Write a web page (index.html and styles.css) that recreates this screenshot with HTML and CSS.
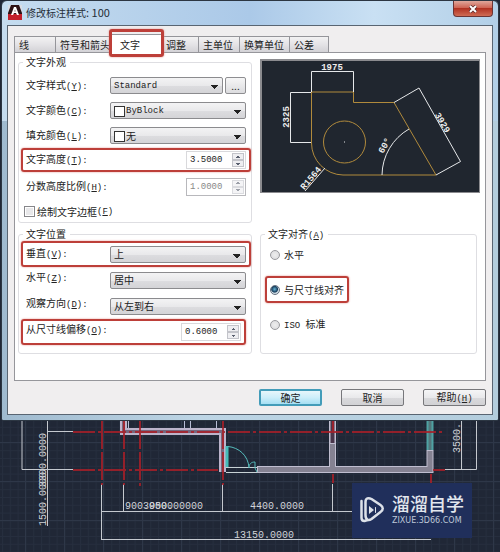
FILE: index.html
```html
<!DOCTYPE html>
<html lang="zh-CN">
<head>
<meta charset="utf-8">
<title>修改标注样式: 100</title>
<link rel="stylesheet" href="styles.css">
</head>
<body>
<main class="dialog">
  <header class="titlebar">
    <svg class="app-icon" viewBox="0 0 14 15" aria-hidden="true">
      <path d="M0 0h14v9H0z" fill="#2b1114"/><path d="M0 9h14v6H0z" fill="#c3202b"/>
      <path d="M0 0h3L0 8zM11 0h3v8z" fill="#d8dde4"/>
      <path d="M3 10 6 2h2l3 8H9L8 8H6l-1 2z" fill="#fff"/><path d="m6.500 6.500.500-2 .500 2z" fill="#2b1114"/>
    </svg>
    <h1>修改标注样式<span>: 100</span></h1>
    <button class="close" aria-label="关闭"><svg viewBox="0 0 10 8"><path d="m2 1 6 6M8 1 2 7" stroke="#5c2a2a" stroke-width="3.500"/><path d="m2 1 6 6M8 1 2 7" stroke="#fff" stroke-width="2"/></svg></button>
  </header>
  <div class="client">
    <nav class="tabs">
      <button class="tab t-line">线</button>
      <button class="tab t-symbol">符号和箭头</button>
      <button class="tab t-text active marked">文字</button>
      <button class="tab t-fit">调整</button>
      <button class="tab t-unit">主单位</button>
      <button class="tab t-alt">换算单位</button>
      <button class="tab t-tol">公差</button>
    </nav>
    <section class="panel">
      <div class="column">
        <fieldset class="group appearance">
          <legend>文字外观</legend>
          <div class="row"><label for="style">文字样式<span class="key">(<u>Y</u>):</span></label><select id="style"><option>Standard</option></select><button class="more" aria-label="浏览">...</button></div>
          <div class="row"><label for="color">文字颜色<span class="key">(<u>C</u>):</span></label><div class="swatch"><select id="color"><option>ByBlock</option></select></div></div>
          <div class="row"><label for="fill">填充颜色<span class="key">(<u>L</u>):</span></label><div class="swatch"><select id="fill"><option>无</option></select></div></div>
          <div class="row marked"><label for="height">文字高度<span class="key">(<u>T</u>):</span></label><div class="spin"><input id="height" type="text" value="3.5000"><span class="steps"><button aria-label="增大"></button><button aria-label="减小"></button></span></div></div>
          <div class="row"><label for="ratio">分数高度比例<span class="key">(<u>H</u>):</span></label><div class="spin off"><input id="ratio" type="text" value="1.0000" disabled><span class="steps"><button aria-label="增大" disabled></button><button aria-label="减小" disabled></button></span></div></div>
          <div class="row"><label class="check"><input type="checkbox">绘制文字边框<span class="key">(<u>F</u>)</span></label></div>
        </fieldset>
        <fieldset class="group placement">
          <legend>文字位置</legend>
          <div class="row marked"><label for="vert">垂直<span class="key">(<u>V</u>):</span></label><select id="vert"><option>上</option></select></div>
          <div class="row"><label for="horiz">水平<span class="key">(<u>Z</u>):</span></label><select id="horiz"><option>居中</option></select></div>
          <div class="row"><label for="view">观察方向<span class="key">(<u>D</u>):</span></label><select id="view"><option>从左到右</option></select></div>
          <div class="row marked inner"><label for="offset">从尺寸线偏移<span class="key">(<u>O</u>):</span></label><div class="spin"><input id="offset" type="text" value="0.6000"><span class="steps"><button aria-label="增大"></button><button aria-label="减小"></button></span></div></div>
        </fieldset>
      </div>
      <div class="column side">
        <svg class="preview" viewBox="260 59 220 134" aria-label="标注预览">
          <path d="M260 59h220v134H260z" fill="#8b8b8f"/><path d="M262 61h217v131H262z" fill="#20262f"/>
          <g fill="none" stroke="#b08a3c"><path d="M311.500 92h42v10.500H394L436 175h-93a32 32 0 0 1-31.500-32z"/><circle cx="344.500" cy="142" r="21"/></g>
          <g fill="none" stroke="#e6e8ea"><path d="M311.500 92V71.500h42V92M311 92.500h-20.500v50H311M394 102.500 419 88l41.500 73.500L436 175M382 175a54 54 0 0 1 27-46M325 168l-20 23M344 142h1"/></g>
          <g class="cad bold" text-anchor="middle">
            <text x="332" y="70">1975</text>
            <text transform="translate(289 117) rotate(-90)">2325</text>
            <text transform="translate(440 124) rotate(60)">3929</text>
            <text transform="translate(387 147) rotate(-60)">60°</text>
            <text transform="translate(313 180) rotate(-50)">R1564</text>
          </g>
        </svg>
        <fieldset class="group align">
          <legend>文字对齐<span class="key">(<u>A</u>)</span></legend>
          <label class="choice"><input type="radio" name="align">水平</label>
          <label class="choice marked"><input type="radio" name="align" checked>与尺寸线对齐</label>
          <label class="choice"><input type="radio" name="align"><span><span class="iso">ISO </span>标准</span></label>
        </fieldset>
      </div>
    </section>
    <footer class="actions">
      <button class="default">确定</button><button>取消</button><button>帮助<span class="key">(<u>H</u>)</span></button>
    </footer>
  </div>
</main>
<svg class="drawing" viewBox="0 421 500 131" aria-label="平面图">
  <defs>
    <pattern id="minor" width="7.800" height="7.800" patternUnits="userSpaceOnUse" x="2" y="419"><path d="M0 .500h8M.500 0v8" stroke="#262e3e" fill="none"/></pattern>
    <pattern id="major" width="39" height="39" patternUnits="userSpaceOnUse" x="25" y="442"><path d="M0 .500h39M.500 0v39" stroke="#2e3748" fill="none"/></pattern>
  </defs>
  <path d="M0 421h500v131H0z" fill="#202736"/><path d="M0 421h500v131H0z" fill="url(#minor)"/><path d="M0 421h500v131H0z" fill="url(#major)"/>
  <g fill="none" stroke="#c5c9cf">
    <path d="M22 421v48.500h51M47.500 421v105M47 431.500h26M101.500 484v56M123.500 484v28M222.500 484v28M332.500 484v28M101 511.500h330M101 539.500h330M461.500 421v48M476.500 421v48.500H445"/>
  </g>
  <g fill="none">
    <path d="M123.500 421v10.500h99V472" stroke="#bcb4cb" stroke-width="7"/>
    <path d="M123.500 421v10.500h99V472" stroke="#76677e" stroke-width="3"/>
    <path d="M128.500 421v7M184.500 421v7M190.500 421v7M216.500 421v7" stroke="#b7bdd5"/>
    <path d="M332.500 421v46M257 469.500h173V450" stroke="#c0bed0" stroke-width="7"/>
    <path d="M332.500 444v24M258 469.500h172V451" stroke="#858292" stroke-width="5"/>
    <path d="M332.500 421v22" stroke="#49364b" stroke-width="4"/>
    <path d="M430 421v29" stroke="#4fa2a3" stroke-width="7"/><path d="M430 421v29" stroke="#53767b" stroke-width="3"/>
  </g>
  <g fill="none" stroke="#a81f28" stroke-width="2" opacity=".85">
    <path d="M73 432h370M73 470h145" stroke-dasharray="22 3 3 3"/>
    <path d="M102 421v64M124 421v64M140 421v65M223 421v64M333 421v12M333 474v9M431 474v9M433 470h12" stroke-dasharray="28 3"/>
  </g>
  <g fill="none"><path d="M226 467.500h31M226 472.500h31" stroke="#c8d2d5"/><path d="M227 446v21" stroke="#45bcb9" stroke-width="3"/><path d="M228 446.500c11 1 20 9 21 21M249 468c0-4 2-6 6-6v6l2 4" stroke="#55bcbc"/></g>
  <g class="cad">
    <text x="125" y="509">900.0000</text><text x="143" y="509">3950.00000</text><text x="250" y="509">4400.0000</text><text x="234" y="538">13150.0000</text>
    <text transform="translate(46 526) rotate(-90)">1500.0000</text><text transform="translate(46 487) rotate(-90)">3300.0000</text><text transform="translate(460 453) rotate(-90)">3500.</text>
  </g>
  <path d="M352 483h120v55H352z" fill="#202f5b"/>
  <g fill="none" stroke="#dce1e9" stroke-width="2.500" stroke-linecap="round" stroke-linejoin="round">
    <path d="M361.500 501v17q0 3 3 3l3-1"/><path d="M365.500 515v-13c0-4 3-4.500 6-3l9 6c3 2 3 5 0 7l-9 7c-3 2-6 1-6-4z"/>
    <path d="M375.500 507.500v5" stroke-width="1"/>
  </g>
  <path d="m369 506 5 4-5 4z" fill="#dce1e9"/>
  <text class="brand" x="392" y="511">溜溜自学</text><text class="site" x="392" y="523">ZIXUE.3D66.COM</text>
</svg>
</body>
</html>
```

FILE: styles.css
```css
* { box-sizing: border-box; }
body { margin: 0; background: #202736; color: #222; font: 10px/14px "Noto Sans CJK SC", sans-serif; }
button, select, input { font: inherit; color: inherit; margin: 0; padding: 0; }
.key, .iso { font-family: "Liberation Mono", monospace; font-size: 9px; }
.iso { white-space: pre; }

.dialog {
  margin: 0 1px;
  padding: 0 5px 5px;
  border: 1px solid #2c3642;
  border-radius: 6px 6px 2px 2px;
  background: linear-gradient(90deg, #c5dcef, #abc9e8 50%, #c9e0f3 75%, #b2cfe7) top / 100% 120px no-repeat, linear-gradient(90deg, #9fbacf, #bdd5e5 40%, #b3cddd);
}
.titlebar { display: flex; align-items: center; height: 24px; padding-bottom: 2px; }
.app-icon { width: 14px; height: 15px; margin-left: 1px; }
h1 { flex: 1; margin: 0 0 0 4px; font-size: 10px; font-weight: 400; color: #252e38; }
h1 span { font-size: 11px; }
.close { align-self: flex-start; width: 40px; height: 16px; border: 1px solid #6b3434; border-top: 0; border-radius: 0 0 4px 4px; background: linear-gradient(#dfa79b, #ce6454 45%, #b13222 50%, #cf6c55); }
.close svg { display: block; width: 10px; height: 8px; margin: 0 auto; }

.client { border: 1px solid #596572; background: #f0eeef; padding: 10px 6px 8px; }
.tabs { display: flex; height: 16px; }
.tab { height: 16px; padding: 0 0 0 4px; border: 1px solid #95959a; border-width: 1px 1px 0 0; background: linear-gradient(#f3f2f3, #e4e3e6 50%, #d3d2d6); text-align: left; line-height: 14px; white-space: nowrap; overflow: hidden; }
.tab:first-child { border-left-width: 1px; }
.t-line { flex: 0 0 42px; }
.t-symbol { flex: 0 0 56px; }
.t-text { flex: 0 0 50px; }
.t-fit { flex: 0 0 37px; }
.t-unit { flex: 0 0 41px; }
.t-alt { flex: 0 0 50px; }
.t-tol { flex: 0 0 39px; }
.tab.active { position: relative; overflow: visible; margin-top: -2px; height: 20px; padding-left: 8px; background: #fff; z-index: 1; }

.marked { position: relative; }
.marked::before { content: ""; position: absolute; inset: 0 -5px; border: 2px solid #bd3f39; border-radius: 3px; box-shadow: 0 0 2px #df8b84; pointer-events: none; }
.tab.marked::before { inset: -6px -3px -3px; border-width: 3px; }
.inner.marked::before { right: 0; }

.panel { display: grid; grid-template-columns: 234fr 220fr; gap: 8px; padding: 2px 5px 26px 3px; border: 1px solid #96969b; background: #fff; }
.column { display: flex; flex-direction: column; min-width: 0; }
.side { padding-top: 4px; }
.group { position: relative; margin: 0; min-width: 0; border: 1px solid #dedee2; border-radius: 3px; padding: 0 5px 0 7px; }
legend { padding: 0 4px 0 3px; margin-left: -3px; height: 14px; }
.row { display: flex; align-items: center; }
.row > label:not(.check) { flex: 0 0 84px; white-space: nowrap; }
.appearance { padding-top: 4px; }
.appearance .row { height: 25px; }
.appearance .row:nth-of-type(4) { height: 24px; }
.appearance .row:nth-of-type(5) { height: 29px; }
.appearance .row:last-child { height: 21px; }
.placement { margin-top: 4px; padding-bottom: 8px; }
.placement .row { height: 26px; }
.placement .row:not(:first-of-type) label { padding-bottom: 4px; }

select { appearance: none; flex: 1; min-width: 0; width: 100%; height: 17px; padding: 0 14px 0 3px; border: 1px solid #8b8b8e; border-radius: 2px; line-height: 14px;
  background: conic-gradient(from -45deg at 50% 100%, #222 90deg, transparent 0) right 4px top 7px / 8px 4px no-repeat, linear-gradient(#f3f3f4, #e9e9eb 50%, #dcdcdf 55%, #d4d4d7);
}
#style, #color { font-family: "Liberation Mono", monospace; font-size: 9px; }
.swatch { position: relative; display: flex; flex: 1; }
.swatch select { padding-left: 15px; }
.swatch::before { content: ""; position: absolute; left: 4px; top: 4px; width: 9px; height: 9px; border: 1px solid #333; background: #fff; }
.more { width: 21px; height: 17px; margin-left: 2px; border: 1px solid #8e8e91; border-radius: 2px; background: linear-gradient(#f6f6f6, #dcdcdf); line-height: 10px; }
.spin { display: flex; width: 60px; height: 18px; margin-left: auto; border: 1px solid #d9d9dc; background: #fff; padding: 1px; }
.inner .spin { margin-right: 5px; }
.spin input { flex: 1; min-width: 0; border: 0; padding-left: 2px; background: transparent; font-family: "Liberation Mono", monospace; font-size: 9px; }
.steps { display: flex; flex-direction: column; width: 12px; }
.steps button { flex: 1; border: 1px solid #c3c4ca; background: conic-gradient(from 135deg at 50% 0, #59606f 90deg, transparent 0) center / 4px 2px no-repeat, #eeeef1; }
.steps button:last-child { background: conic-gradient(from -45deg at 50% 100%, #59606f 90deg, transparent 0) center / 4px 2px no-repeat, #eeeef1; }
.off { color: #888; border-color: #b8b8bc; }
.off .steps { opacity: .6; }
.check { display: flex; align-items: center; margin-left: -2px; }
.check input { appearance: none; width: 11px; height: 11px; margin-right: 2px; border: 1px solid #86868a; background: #e8e8ea; box-shadow: inset 0 0 0 1px #fff; }

.preview { display: block; width: 100%; height: 134px; }
.align { margin: 34px 3px 0 0; padding: 0 0 6px 9px; flex: 1; }
.align legend { margin-left: -5px; }
.choice { display: flex; align-items: center; width: fit-content; height: 27px; margin-bottom: 8px; }
.choice input { appearance: none; width: 10px; height: 10px; margin-right: 4px; border: 1px solid #9a9a9e; border-radius: 50%; background: radial-gradient(#eee, #d8d8db); }
.choice input:checked { border-color: #65717f; background: radial-gradient(circle at 45% 40%, #66b5d6, #173d5d 45%, #d0dde5 60%); }

.actions { display: flex; justify-content: flex-end; gap: 19px; margin-top: 8px; }
.actions button { width: 63px; height: 17px; border: 1px solid #77777b; border-radius: 2px; background: linear-gradient(#f5f5f6, #e9e9eb 50%, #d9d9dc 52%, #d2d2d5); line-height: 14px; }
.actions .default { border: 2px solid #439cb9; background: linear-gradient(#e7f6fb, #cdeefa 50%, #a5dff3); line-height: 12px; }

.drawing { display: block; width: 100%; }
.cad { font: 10px "Liberation Mono", monospace; fill: #d0d3d8; }
.bold { font-size: 9px; font-weight: 700; fill: #eee; }
.brand { font: 500 18px "Noto Sans CJK SC", sans-serif; fill: #e3e7ee; }
.site { font: 8px "DejaVu Sans", sans-serif; fill: #bfc8d8; }
```
